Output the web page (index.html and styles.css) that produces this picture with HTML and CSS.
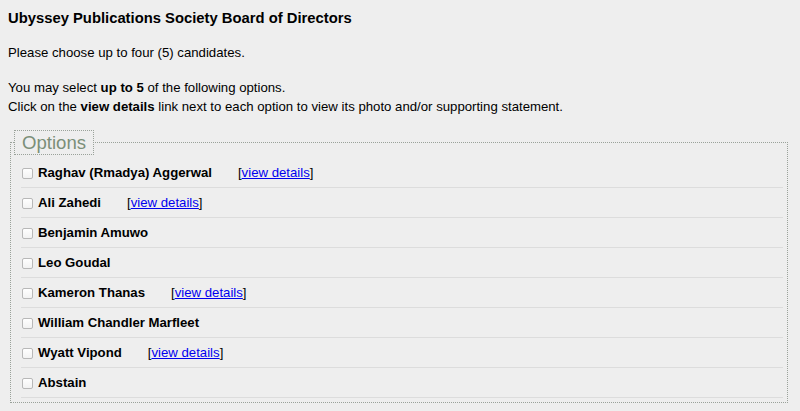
FILE: index.html
```html
<!DOCTYPE html>
<html lang="en">
<head>
    <meta charset="UTF-8">
    <meta name="viewport" content="width=device-width, initial-scale=1.0">
    <title>Ubyssey Publications Society Board of Directors</title>
    <link rel="stylesheet" href="styles.css">
</head>
<body>
    <h1 class="title">Ubyssey Publications Society Board of Directors</h1>
    <p class="intro">Please choose up to four (5) candidates.</p>
    <p class="intro">
        You may select <b>up to 5</b> of the following options.<br>
        Click on the <b>view details</b> link next to each option to view its photo and/or supporting statement.
    </p>

    <fieldset class="options">
        <legend>Options</legend>
        <div class="row">
            <input type="checkbox" class="check">
            <span class="name">Raghav (Rmadya) Aggerwal</span>
            <span class="details">[<a href="#">view details</a>]</span>
        </div>
        <div class="row">
            <input type="checkbox" class="check">
            <span class="name">Ali Zahedi</span>
            <span class="details">[<a href="#">view details</a>]</span>
        </div>
        <div class="row">
            <input type="checkbox" class="check">
            <span class="name">Benjamin Amuwo</span>
        </div>
        <div class="row">
            <input type="checkbox" class="check">
            <span class="name">Leo Goudal</span>
        </div>
        <div class="row">
            <input type="checkbox" class="check">
            <span class="name">Kameron Thanas</span>
            <span class="details">[<a href="#">view details</a>]</span>
        </div>
        <div class="row">
            <input type="checkbox" class="check">
            <span class="name">William Chandler Marfleet</span>
        </div>
        <div class="row">
            <input type="checkbox" class="check">
            <span class="name">Wyatt Vipond</span>
            <span class="details">[<a href="#">view details</a>]</span>
        </div>
        <div class="row">
            <input type="checkbox" class="check">
            <span class="name">Abstain</span>
        </div>
    </fieldset>
</body>
</html>
```

FILE: styles.css
```css
body {
    margin: 0;
    padding: 0 8px;
    background: #eeeeee;
    color: #000;
    font-family: "Liberation Sans", Arial, sans-serif;
    font-size: 13.2px;
}
.title {
    margin: 0;
    padding-top: 10px;
    font-size: 14.8px;
    line-height: 17px;
    font-weight: bold;
}
.intro {
    margin: 16px 0 0;
    line-height: 19px;
}
.options {
    margin: 14px 4px 0 2px;
    padding: 0 4px 4px 10px;
    border: 1px dotted #9aa29a;
}
.options legend {
    margin-left: -7px;
    padding: 0 7px;
    border: 1px dotted #9aa29a;
    color: #7b8f79;
    font-size: 18.6px;
    line-height: 23px;
}
.row {
    display: flex;
    align-items: center;
    height: 29px;
    border-bottom: 1px solid #dcdcdc;
}
.row:first-of-type {
    margin-top: 3px;
}
.check {
    appearance: none;
    -webkit-appearance: none;
    width: 11px;
    height: 11px;
    margin: 1px 5px 0 1px;
    border: 1px solid #b8b8b8;
    border-radius: 2px;
    background: linear-gradient(#ffffff, #f2f2f2);
}
.name {
    font-weight: bold;
}
.details {
    margin-left: 26px;
}
.details a {
    color: #0000ee;
}
```
